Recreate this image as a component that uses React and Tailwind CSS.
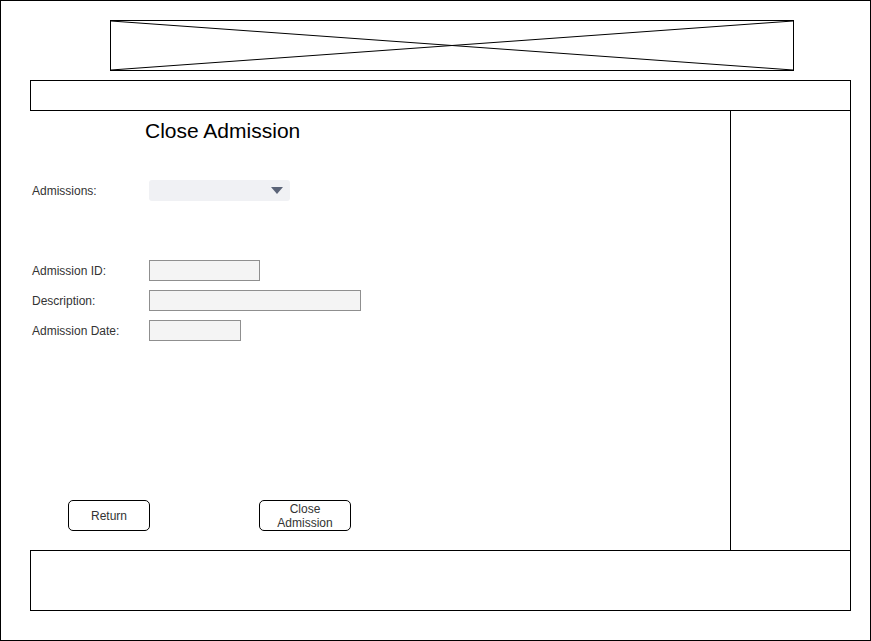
const fieldRows = [
  { label: 'Admission ID:', width: 'w-[111px]' },
  { label: 'Description:', width: 'w-[212px]' },
  { label: 'Admission Date:', width: 'w-[92px]' },
]

const ImagePlaceholder = () => (
  <div className="relative ml-[109px] mt-[19px] h-[51px] w-[684px] border border-black">
    <svg className="absolute inset-0 h-full w-full" viewBox="0 0 682 49" preserveAspectRatio="none">
      <line x1="0" y1="0" x2="682" y2="49" stroke="#000" strokeWidth="1" />
      <line x1="0" y1="49" x2="682" y2="0" stroke="#000" strokeWidth="1" />
    </svg>
  </div>
)

const App = () => {
  return (
    <div
      className="flex h-[641px] w-[871px] flex-col border border-black bg-white text-[12px] text-[#333]"
      style={{ fontFamily: '"Liberation Sans", Arial, sans-serif' }}
    >
      <ImagePlaceholder />

      <div className="ml-[29px] mt-[9px] flex w-[821px] flex-col">
        {/* Header bar */}
        <div className="h-[31px] border border-black" />

        {/* Main + sidebar */}
        <div className="flex h-[439px]">
          <div className="flex flex-1 flex-col">
            <h1 className="mt-[8px] pl-[115px] text-[21px] leading-[24px] text-black">Close Admission</h1>

            <div className="mt-[37px] flex items-center">
              <span className="w-[119px] pl-[2px]">Admissions:</span>
              <div className="flex h-[21px] w-[141px] items-center justify-end rounded-[3px] bg-[#f0f1f4] pr-[7px]">
                <svg width="12" height="7" viewBox="0 0 12 7">
                  <path d="M0 0 L12 0 L6 7 Z" fill="#5b6478" />
                </svg>
              </div>
            </div>

            <div className="mt-[59px] flex flex-col gap-[9px]">
              {fieldRows.map((row) => (
                <div key={row.label} className="flex items-center">
                  <span className="w-[119px] pl-[2px]">{row.label}</span>
                  <div className={`h-[21px] ${row.width} border border-[#8f8f8f] bg-[#f4f4f4]`} />
                </div>
              ))}
            </div>

            <div className="mt-[159px] flex items-center pl-[38px]">
              <button className="h-[31px] w-[82px] rounded-[5px] border border-black bg-white text-[12px] text-[#333]">
                Return
              </button>
              <button className="ml-[109px] h-[31px] w-[92px] rounded-[5px] border border-black bg-white text-[12px] leading-[14px] text-[#333]">
                Close
                <br />
                Admission
              </button>
            </div>
          </div>

          {/* Right sidebar */}
          <div className="w-[121px] border-x border-black" />
        </div>

        {/* Footer */}
        <div className="h-[61px] border border-black" />
      </div>
    </div>
  )
}

export default App
